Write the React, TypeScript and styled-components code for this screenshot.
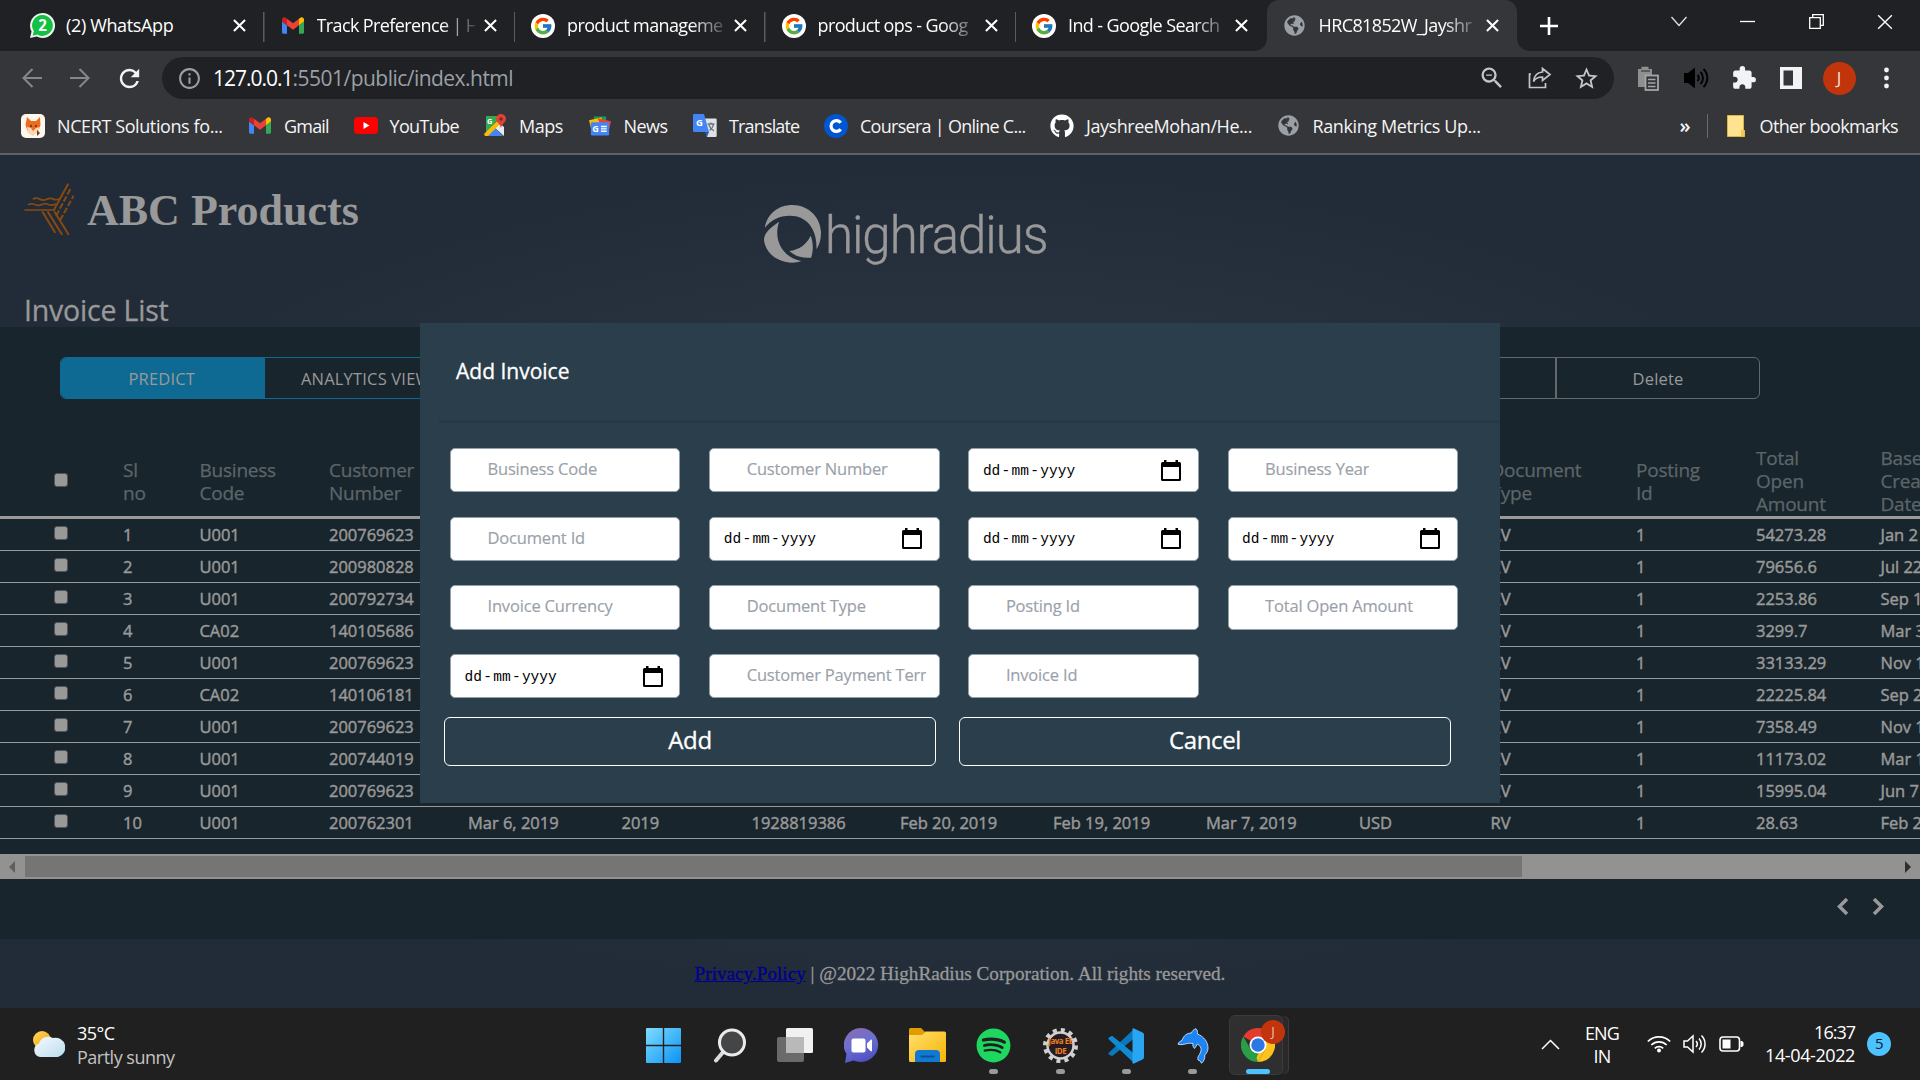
import React from 'react';
import styled, { createGlobalStyle, css } from 'styled-components';
import { FcGoogle } from 'react-icons/fc';
import { FaGithub, FaGlobeAmericas, FaSpotify } from 'react-icons/fa';
import { MdExtension, MdRefresh, MdStarBorder, MdZoomOut, MdInfoOutline } from 'react-icons/md';

const chromeFont = `"Open Sans", "Noto Sans", sans-serif`;
const pageFont = `"Open Sans", "Noto Sans", sans-serif`;

const GlobalStyle = createGlobalStyle`
  * { box-sizing: border-box; }
  body { margin: 0; background: #202124; overflow: hidden; font-family: ${pageFont}; }
  svg { display: block; flex: none; }
`;

const Screen = styled.div`
  width: 1920px;
  height: 1080px;
  display: flex;
  flex-direction: column;
  overflow: hidden;
`;

/* ---------- browser chrome ---------- */

const TabBar = styled.div`
  flex: none;
  height: 51px;
  display: flex;
  padding-left: 14px;
  background: #202124;
  font: 400 18px/24px ${chromeFont};
  color: #fff;
`;

const TabItem = styled.div<{ $active?: boolean; $divider?: boolean }>`
  position: relative;
  flex: none;
  width: 250.5px;
  height: 51px;
  display: flex;
  align-items: center;
  padding: 0 18px 0 16px;
  ${p => p.$divider && css`
    background: linear-gradient(#5a5b5e, #5a5b5e) right 12px / 1.5px 30px no-repeat;
    background-position: right 12px;
  `}
  ${p => p.$active && css`
    background: #35363a;
    border-radius: 12px 12px 0 0;
    &::before, &::after {
      content: '';
      position: absolute;
      bottom: 0;
      width: 12px;
      height: 12px;
    }
    &::before { left: -12px; background: radial-gradient(circle at 0 0, transparent 11.5px, #35363a 12px); }
    &::after { right: -12px; background: radial-gradient(circle at 100% 0, transparent 11.5px, #35363a 12px); }
  `}
`;

const TabIcon = styled.span<{ $disc?: boolean }>`
  flex: none;
  width: 24px;
  height: 24px;
  display: flex;
  align-items: center;
  justify-content: center;
  border-radius: 50%;
  background: ${p => (p.$disc ? '#fff' : 'transparent')};
`;

const TabTitle = styled.span<{ $fade?: boolean }>`
  flex: none;
  width: 158px;
  margin: -1px 9px 0 12px;
  overflow: hidden;
  white-space: nowrap;
  letter-spacing: ${p => (p.$fade ? -0.61 : -0.36)}px;
  ${p => p.$fade && css`mask-image: linear-gradient(90deg, #000 124px, rgba(0, 0, 0, 0.15) 158px);`}
`;

const NewTab = styled.div`
  width: 60px;
  display: flex;
  align-items: center;
  justify-content: center;
  margin-left: 2px;
`;

const WindowControls = styled.div`
  margin-left: auto;
  display: flex;
  width: 276px;
  padding: 14px 27px 0 27px;
  justify-content: space-between;
`;

const Toolbar = styled.div`
  flex: none;
  height: 54px;
  display: flex;
  align-items: center;
  background: #35363a;
  padding: 0 20px 0 22px;
`;

const NavButtons = styled.div`
  width: 140px;
  display: flex;
  align-items: center;
  gap: 25.5px;
`;

const AddressBar = styled.div`
  width: 1452px;
  height: 42px;
  display: flex;
  align-items: center;
  border-radius: 21px;
  background: #202124;
  padding: 0 14px 0 15px;
  color: #9aa0a6;
  font: 400 21px/30px ${chromeFont};
`;

const Url = styled.span`
  flex: 1;
  margin-left: 11px;
  white-space: nowrap;
  letter-spacing: -0.53px;
`;

const Host = styled.span`
  color: #fff;
  letter-spacing: -1px;
`;

const AddressActions = styled.div`
  display: flex;
  align-items: center;
  gap: 21.5px;
  color: #c4c7ca;
`;

const Extensions = styled.div`
  display: grid;
  grid-template-columns: 47px 47px 49px 43px 50px 26px;
  align-items: center;
  margin-left: 22.5px;
`;

const Avatar = styled.span`
  width: 33px;
  height: 33px;
  border-radius: 50%;
  background: #c2340b;
  color: #f5e3dc;
  font: 400 17px/32px ${chromeFont};
  text-align: center;
`;

const Bookmarks = styled.div`
  flex: none;
  height: 50px;
  display: flex;
  align-items: center;
  background: #35363a;
  border-bottom: 2px solid #5f6164;
  padding: 0 22px 7px 20.5px;
  color: #f4f4f4;
  font: 400 18px/24px ${chromeFont};
  white-space: nowrap;
`;

const Bookmark = styled.div<{ $w: number }>`
  flex: none;
  width: ${p => p.$w}px;
  display: flex;
  align-items: center;
  gap: 11.5px;
`;

const BookmarkLabel = styled.span<{ $ls?: number }>`
  letter-spacing: ${p => p.$ls ?? 0}px;
`;

const BookmarkIcon = styled.span`
  flex: none;
  width: 25px;
  height: 25px;
  display: flex;
  align-items: center;
  justify-content: center;
`;

const MoreMark = styled.span`
  margin-left: auto;
  width: 27px;
  font-size: 20px;
  font-weight: 600;
`;

const OtherBookmarks = styled.div`
  display: flex;
  align-items: center;
  height: 24px;
  gap: 15px;
  padding-left: 19px;
  border-left: 1.5px solid #6a6b6e;
`;

/* ---------- page ---------- */

const Page = styled.main`
  position: relative;
  flex: none;
  height: 853px;
  display: flex;
  flex-direction: column;
  background: radial-gradient(ellipse at 50% 50%, #323a48 0%, #222c38 70%);
`;

const PageHeader = styled.header`
  height: 172px;
  display: grid;
  grid-template-columns: 740px 1fr;
  grid-template-rows: 137px 35px;
  padding-left: 24px;
  color: #999;
`;

const Brand = styled.div`
  display: flex;
  align-items: center;
  height: 54px;
  margin-top: 27px;
  gap: 13px;
`;

const BrandName = styled.span`
  padding-top: 3px;
  font: 700 44px/52px "Liberation Serif", "Times New Roman", serif;
`;

const Partner = styled.div`
  display: flex;
  align-items: center;
  gap: 4px;
  height: 58px;
  margin-top: 50px;
`;

const PartnerName = styled.span`
  margin-top: 3px;
  font: 300 51px/58px Roboto, sans-serif;
  letter-spacing: -1.05px;
  -webkit-text-stroke: 0.4px #999;
`;

const ListTitle = styled.h1`
  margin: 0;
  font: 400 28.5px/36px ${pageFont};
  letter-spacing: -0.2px;
  -webkit-text-stroke: 0.3px #999;
`;

const Panel = styled.section`
  height: 612px;
  display: flex;
  flex-direction: column;
  background: #18252c;
`;

const Actions = styled.div`
  display: flex;
  justify-content: space-between;
  padding: 30px 160px 0 60px;
  height: 119px;
`;

const ButtonGroup = styled.div<{ $accent?: boolean }>`
  display: flex;
  height: 42px;
  border: 1px solid ${p => (p.$accent ? '#0e6a93' : '#63686c')};
  border-radius: 6px;
  overflow: hidden;
`;

const GroupButton = styled.div<{ $filled?: boolean; $start?: boolean; $divider?: boolean }>`
  width: 204px;
  line-height: 41px;
  font-size: 16.5px;
  text-align: ${p => (p.$start ? 'left' : 'center')};
  padding-left: ${p => (p.$start ? 36 : 0)}px;
  padding-right: ${p => (p.$filled ? 2.5 : 0)}px;
  color: #999;
  letter-spacing: 0.18px;
  background: ${p => (p.$filled ? '#0e6a93' : 'transparent')};
  border-left: ${p => (p.$divider ? '2px solid #63686c' : '0')};
  white-space: nowrap;
`;

const columns = '123px 76.5px 129.5px 139px 153.5px 130px 148.5px 153px 153px 153px 131.5px 145.500px 120px 124.500px 1fr';

const TableHead = styled.div`
  display: grid;
  grid-template-columns: ${columns};
  align-items: center;
  height: 73px;
  padding-top: 1px;
  border-bottom: 3px solid #999;
  font-size: 19px;
  line-height: 23px;
  letter-spacing: -0.22px;
  -webkit-text-stroke: 0.25px #5d656a;
  color: #5d656a;
  overflow: hidden;
`;

const HeadCell = styled.div`
  white-space: pre;
`;

const TableRow = styled.div`
  display: grid;
  grid-template-columns: ${columns};
  align-items: center;
  height: 32px;
  border-bottom: 1px solid #999;
  font-size: 16.5px;
  line-height: 30px;
  letter-spacing: -0.02px;
  -webkit-text-stroke: 0.45px #999;
  color: #999;
  white-space: nowrap;
  overflow: hidden;
`;

const CheckCell = styled.div<{ $head?: boolean }>`
  display: flex;
  padding-left: 54px;
  padding-bottom: ${p => (p.$head ? 0 : 3)}px;
  margin-top: ${p => (p.$head ? -3 : 0)}px;
`;

const Checkbox = styled.span`
  width: 14px;
  height: 14px;
  border: 1px solid #555;
  border-radius: 3px;
  background: #999;
`;

const ScrollBar = styled.div`
  display: flex;
  align-items: center;
  height: 25px;
  margin-top: 15px;
  padding: 0 9px;
  background: #929292;
`;

const Thumb = styled.div`
  width: 1497px;
  height: 21px;
  margin: 0 auto 0 10px;
  background: #757575;
`;

const Pager = styled.div`
  flex: 1;
  display: flex;
  justify-content: flex-end;
  align-items: center;
  gap: 23px;
  padding: 0 35.5px 5px 0;
`;

const Footer = styled.footer`
  height: 69px;
  display: flex;
  justify-content: center;
  font: 400 19.2px/70px "Liberation Serif", "Times New Roman", serif;
  -webkit-text-stroke: 0.3px;
  color: #999;
  white-space: pre;
`;

const PolicyLink = styled.span`
  color: #00008f;
  text-decoration: underline;
`;

/* ---------- modal ---------- */

const Modal = styled.div`
  position: absolute;
  left: 420px;
  top: 168px;
  width: 1080px;
  height: 480px;
  background: #2b3e4b;
`;

const ModalTitle = styled.h2`
  margin: 0 0 0 18px;
  height: 100px;
  padding: 28px 0 0 18px;
  border-bottom: 3px solid #283a47;
  font: 400 21px/40px ${pageFont};
  -webkit-text-stroke: 0.3px #fff;
  color: #fff;
`;

const FieldGrid = styled.div`
  display: grid;
  grid-template-columns: repeat(4, 230.4px);
  grid-auto-rows: 44.4px;
  column-gap: 28.8px;
  row-gap: 24.3px;
  padding: 25px 0 0 30px;
`;

const Field = styled.div<{ $date?: boolean }>`
  display: flex;
  align-items: center;
  justify-content: space-between;
  border: 1px solid #93a0a9;
  border-radius: 5px;
  background: #fff;
  padding: 0 ${p => (p.$date ? 16.5 : 13)}px 0 ${p => (p.$date ? 13.5 : 36.5)}px;
`;

const Placeholder = styled.span`
  margin-top: -2.5px;
  overflow: hidden;
  white-space: nowrap;
  font-size: 16.5px;
  line-height: 26px;
  letter-spacing: -0.18px;
  -webkit-text-stroke: 0.15px #9aa1a9;
  color: #9aa1a9;
`;

const DateText = styled.span`
  display: flex;
  gap: 1.3px;
  padding-top: 1px;
  font: 400 14.5px/20px "Liberation Mono", monospace;
  color: #000;
`;

const ModalActions = styled.div`
  display: grid;
  grid-template-columns: 492px 492px;
  gap: 23px;
  padding: 18.6px 0 0 24px;
`;

const ModalButton = styled.div`
  height: 49px;
  border: 1.2px solid #fff;
  border-radius: 6px;
  color: #fff;
  font: 400 24px/43px ${pageFont};
  letter-spacing: -0.4px;
  -webkit-text-stroke: 0.3px #fff;
  text-align: center;
`;

/* ---------- taskbar ---------- */

const Taskbar = styled.div`
  flex: none;
  height: 72px;
  display: grid;
  grid-template-columns: 645px 661px 1fr;
  background: #202020;
  color: #fff;
  font: 400 18px/24px ${chromeFont};
  letter-spacing: -0.5px;
`;

const Weather = styled.div`
  display: flex;
  align-items: center;
  gap: 12px;
  padding-left: 32px;
`;

const WeatherText = styled.div`
  margin-top: 1px;
`;

const Muted = styled.div`
  color: #c3c3c3;
`;

const Apps = styled.div`
  display: grid;
  grid-template-columns: repeat(10, 66.2px);
`;

const AppSlot = styled.div<{ $active?: boolean }>`
  display: flex;
  flex-direction: column;
  align-items: center;
  width: ${p => (p.$active ? 54 : 36)}px;
  height: ${p => (p.$active ? 60 : 72)}px;
  margin: ${p => (p.$active ? '7px 0 0 -12px' : '0')};
  padding-top: ${p => (p.$active ? 12 : 20)}px;
  ${p => p.$active && css`
    position: relative;
    padding-left: 5px;
    background: #2f2f2f;
    border: 1px solid #3b3b3b;
    border-radius: 6px;
    box-shadow: 6px 0 0 -1px #292929, 7px 0 0 -1px #3b3b3b;
  `}
`;

const Running = styled.span<{ $active?: boolean }>`
  flex: none;
  width: ${p => (p.$active ? 24 : 9)}px;
  height: 5px;
  margin-top: auto;
  margin-bottom: ${p => (p.$active ? 0 : 6)}px;
  border-radius: 3px;
  background: ${p => (p.$active ? '#4cc2ff' : '#9a9a9a')};
`;

const ProfileBadge = styled.span`
  position: absolute;
  left: 31px;
  top: 4px;
  width: 24px;
  height: 24px;
  border-radius: 50%;
  background: #c2340b;
  font: 400 13px/23px ${chromeFont};
  color: #e9c4b8;
  text-align: center;
`;

const Tray = styled.div`
  display: flex;
  align-items: center;
  justify-content: flex-end;
  padding-right: 29px;
`;

const Language = styled.div`
  width: 40px;
  margin: 0 25px 0 22px;
  text-align: center;
  line-height: 23px;
  letter-spacing: -0.8px;
  padding-top: 1px;
`;

const TrayIcons = styled.div`
  display: flex;
  align-items: center;
  gap: 12px;
`;

const Clock = styled.div`
  width: 100px;
  margin: 0 12px 0 11px;
  text-align: right;
  line-height: 23px;
  letter-spacing: -0.4px;
  padding-bottom: 1px;
`;

const Time = styled.div`
  letter-spacing: -1px;
`;

const Notifications = styled.span`
  width: 24px;
  height: 24px;
  border-radius: 50%;
  background: #4cc2ff;
  color: #10202b;
  font: 400 15px/23px ${chromeFont};
  text-align: center;
`;

/* ---------- drawings ---------- */

const CloseIcon = ({ size = 13, width = 2.2 }: { size?: number; width?: number }) => (
  <svg width={size} height={size} viewBox="0 0 14 14" stroke="#fff" strokeWidth={width}>
    <path d="M1 1l12 12M13 1L1 13" />
  </svg>
);

const GmailIcon = () => (
  <svg width="22" height="17" viewBox="52 42 88 66">
    <path fill="#4285f4" d="M58 108h14V74L52 59v43c0 3.32 2.69 6 6 6" />
    <path fill="#34a853" d="M120 108h14c3.32 0 6-2.69 6-6V59l-20 15" />
    <path fill="#fbbc04" d="M120 48v26l20-15v-8c0-7.42-8.47-11.65-14.4-7.2" />
    <path fill="#ea4335" d="M72 74V48l24 18 24-18v26L96 92" />
    <path fill="#c5221f" d="M52 51v8l20 15V48l-5.6-4.2c-5.94-4.45-14.4-.22-14.4 7.2" />
  </svg>
);

const WhatsAppIcon = () => (
  <svg width="25" height="25" viewBox="0 0 24 24">
    <path fill="#e9f7ec" d="M12 0a12 12 0 1 1-5.6 22.6L0 24l1.5-6.2A12 12 0 0 1 12 0z" />
    <path fill="#12c143" d="M12 2a10 10 0 1 1-5 18.7L2.6 21.8l1.1-4.3A10 10 0 0 1 12 2z" />
    <text x="12" y="17.4" textAnchor="middle" fill="#fff" fontSize="14.5" fontWeight="700" fontFamily="Open Sans, sans-serif">2</text>
  </svg>
);

const FoxIcon = () => (
  <svg width="24" height="24" viewBox="0 0 24 24">
    <rect width="24" height="24" rx="5" fill="#fdf7ee" />
    <path fill="#ec6b1e" d="M6 3l4 4h5l4-4 .5 8-2 6-5 3-6-3L4.500 11z" />
    <path fill="#f7d9b5" d="M6 13l4 1 2 3 3-3 4-1-2 5-5 4-5-3z" />
    <path fill="#7c3a16" d="M9 11h2v2H9zM14 11h2v2h-2zM16 16l3 3-3 3z" />
  </svg>
);

const YouTubeIcon = () => (
  <svg width="24" height="17" viewBox="0 0 24 17">
    <rect width="24" height="17" rx="4" fill="#f00" />
    <path fill="#fff" d="M9.500 5v7l6-3.500z" />
  </svg>
);

const MapsIcon = () => (
  <svg width="22" height="23" viewBox="0 0 22 23">
    <path fill="#34a853" d="M2 2h15L2 19z" />
    <path fill="#4285f4" d="M10 13l9 9H2z" />
    <path fill="#e8eaed" d="M14 8l6 5v9L10 13z" />
    <path fill="#fbbc04" d="M0 20L13 7l3 3L4 22H1z" />
    <text x="3" y="9.500" fill="#fff" fontSize="7.500" fontWeight="700" fontFamily="Open Sans, sans-serif">G</text>
    <path fill="#db4437" d="M17 0a5 5 0 0 1 5 5c0 3-4 4.500-5 9-1-4.500-5-6-5-9a5 5 0 0 1 5-5z" />
    <circle cx="17" cy="5" r="1.700" fill="#8c1d12" />
  </svg>
);

const NewsIcon = () => (
  <svg width="22" height="20" viewBox="0 0 23 20">
    <path fill="#0f9d58" d="M5 0h13v8H5z" />
    <path fill="#fbbc04" d="M0 4l13-3 2 6-13 5z" />
    <path fill="#ea4335" d="M9 2l14 3-2 9-8-3z" />
    <rect x="2" y="6" width="19" height="14" rx="1.500" fill="#4285f4" />
    <text x="3.500" y="16.500" fill="#fff" fontSize="9.500" fontWeight="700" fontFamily="Open Sans, sans-serif">G</text>
    <path stroke="#fff" strokeWidth="1.500" d="M12.500 10.500h6M12.500 13h6M12.500 15.500h6" />
  </svg>
);

const TranslateIcon = () => (
  <svg width="24" height="23" viewBox="0 0 24 23">
    <path fill="#dfe1e5" d="M10 4.500h12.500a1.200 1.200 0 0 1 1.200 1.200v16a1.200 1.200 0 0 1-1.200 1.200H14z" />
    <path fill="#4285f4" d="M1 0h10l5 18H1.200A1.200 1.200 0 0 1 0 16.800V1a1 1 0 0 1 1-1z" />
    <path fill="#2a56c6" d="M12 18h4l-2 5z" />
    <path stroke="#6b7683" strokeWidth="1.300" fill="none" d="M14.500 10h7M18 8.500V10M20.500 10c-.5 3-2.500 5.500-4 6.500M16 11c.8 2.500 3 5 5 6" />
    <text x="3" y="12" fill="#fff" fontSize="9.500" fontWeight="700" fontFamily="Open Sans, sans-serif">G</text>
  </svg>
);

const CourseraIcon = () => (
  <svg width="24" height="24" viewBox="0 0 24 24">
    <circle cx="12" cy="12" r="12" fill="#0056d2" />
    <path d="M16.700 8.700a5.400 5.400 0 1 0 0 6.600" fill="none" stroke="#fff" strokeWidth="3.200" />
  </svg>
);

const ReloadIcon = () => <MdRefresh size={29} color="#f1f3f4" />;

const ShareIcon = () => (
  <svg width="24" height="22" viewBox="0 0 24 22" fill="none" stroke="#c4c7ca" strokeWidth="1.700">
    <path d="M3 7H1.500v13.500h16V16" />
    <path d="M14.500 1.500l7.500 6-7.500 6V10c-4 0-7 1-9 4.500C6 9.500 9 5.500 14.500 5z" />
  </svg>
);

const ClipboardIcon = () => (
  <svg width="22" height="25" viewBox="0 0 22 25">
    <path fill="#8f8f8f" d="M1 3h3.500V.8h7V3H15v6H8v12H1z" />
    <path stroke="#35363a" strokeWidth="1.200" d="M4 5h9" />
    <rect x="8.500" y="9.500" width="12.500" height="14.500" fill="#35363a" stroke="#a5a5a5" strokeWidth="1.800" />
    <path stroke="#a5a5a5" strokeWidth="1.600" d="M11 13.500h7.500M11 17h7.500M11 20.500h7.500" />
  </svg>
);

const SpeakerIcon = () => (
  <svg width="25" height="22" viewBox="0 0 25 22" fill="none" stroke="#000" strokeWidth="1.900">
    <path fill="#000" stroke="none" d="M0 6h4l7-5.500v21L4 16H0z" />
    <path d="M13.500 8a4.500 4.500 0 0 1 0 6M16.500 5a8.500 8.500 0 0 1 0 12M19.500 2a12.500 12.500 0 0 1 0 18" />
  </svg>
);

const FolderNote = () => (
  <svg width="18" height="22" viewBox="0 0 18 22">
    <path fill="#ffe390" stroke="#dcb73f" d="M.5.5h16v14l1 1v6H.5z" />
    <path fill="#f1c94c" d="M14 15h3.500v6.500H14z" />
  </svg>
);

const BrandMark = () => (
  <svg width="50" height="53" viewBox="58 95 123 157" preserveAspectRatio="none" fill="none" stroke="#89490f" strokeWidth="5">
    <path d="M59 175h76M130 178L167 97M103 179l32 64M116 179l36 70M133 180l35 69" />
    <path strokeDasharray="17 6" d="M137 192l35-79M147 205l33-72" />
    <path d="M80 143c8-6 12-3 17 0s10 4 17 0 12-3 17 0 10 2 16-1M68 160c8-6 12-4 17-1s10 4 17 0 12-3 17 0 10 2 18-2" />
  </svg>
);

const RingMark = () => (
  <svg width="57" height="58" viewBox="304 75 139 174" preserveAspectRatio="none" fill="#999">
    <path d="M306 143C312 100 340 75 373 75c40 0 70 38 70 84 0 20-4 35-11 49 2-62-24-101-65-101-26 0-47 14-61 36z" />
    <path d="M341 125c-22 18-37 34-37 55 4 40 34 68 69 68 8 0 15-2 22-5-44-10-70-62-54-118z" />
    <path d="M418 167c6 20 7 45 1 66-22 3-40-5-53-20 24-4 42-20 52-46z" />
  </svg>
);

const CalendarIcon = () => (
  <svg width="20" height="21" viewBox="0 0 20 21">
    <path fill="#000" d="M3 0h2.500v2h9V0H17v2h1.500A1.500 1.500 0 0 1 20 3.500v16a1.500 1.500 0 0 1-1.500 1.500h-17A1.500 1.500 0 0 1 0 19.500v-16A1.500 1.500 0 0 1 1.500 2H3z" />
    <path fill="#fff" d="M2 7h16v12H2z" />
  </svg>
);

const WeatherIcon = () => (
  <svg width="33" height="28" viewBox="0 0 33 28">
    <defs>
      <linearGradient id="cloud" x1="0" y1="0" x2="1" y2="1"><stop offset="0" stopColor="#f6fafc" /><stop offset="1" stopColor="#b9ddf0" /></linearGradient>
      <linearGradient id="sun" x1="0" y1="0" x2="1" y2="1"><stop offset="0" stopColor="#ffd75e" /><stop offset="1" stopColor="#f59f0a" /></linearGradient>
    </defs>
    <circle cx="10" cy="10" r="9" fill="url(#sun)" />
    <path fill="url(#cloud)" d="M8 27a7 7 0 0 1-1-13.500A9.500 9.500 0 0 1 21 8a9 9 0 0 1 5 19z" />
  </svg>
);

const WindowsIcon = () => (
  <svg width="35" height="35" viewBox="0 0 35 35">
    <defs><linearGradient id="win" x1="0" y1="0" x2="1" y2="1"><stop offset="0" stopColor="#7fdcff" /><stop offset="1" stopColor="#0a93f5" /></linearGradient></defs>
    <path fill="url(#win)" d="M1 0h15.800v16.800H0V1a1 1 0 0 1 1-1zM18.200 0H34a1 1 0 0 1 1 1v15.800H18.200zM0 18.200h16.800V35H1a1 1 0 0 1-1-1zM18.200 18.200H35V34a1 1 0 0 1-1 1H18.200z" />
  </svg>
);

const SearchIcon = () => (
  <svg width="35" height="35" viewBox="0 0 35 35">
    <path d="M12 23L4 32.500" stroke="#d9dcde" strokeWidth="4" strokeLinecap="round" />
    <circle cx="20" cy="14.500" r="12.500" fill="#454545" stroke="#e9ecee" strokeWidth="3" />
  </svg>
);

const TaskViewIcon = () => (
  <svg width="36" height="35" viewBox="0 0 36 35">
    <rect x="0" y="9" width="27" height="25" rx="2" fill="#6a6a6a" />
    <rect x="9" y="0" width="27" height="25" rx="1.500" fill="#f1f1f1" />
    <path fill="#b9b9b9" d="M9 9h18v16H10.500A1.500 1.500 0 0 1 9 23.500z" />
  </svg>
);

const ChatIcon = () => (
  <svg width="35" height="35" viewBox="0 0 35 35">
    <defs><linearGradient id="chat" x1="0.100" y1="0" x2="0.500" y2="1"><stop offset="0" stopColor="#8c6bb5" /><stop offset="0.500" stopColor="#6b6fd0" /><stop offset="1" stopColor="#4f51c4" /></linearGradient></defs>
    <path fill="url(#chat)" d="M17.500 0a17.500 17 0 1 1-8 32.500L1 35l1.500-9A17.500 17 0 0 1 17.500 0z" />
    <rect x="7.500" y="10.500" width="14" height="14" rx="2" fill="#fff" />
    <path fill="#fff" d="M23 15.500l3.500-3.500c.8-.8 1.500-.3 1.500.6v9.800c0 .9-.7 1.400-1.500.6L23 19.500z" />
  </svg>
);

const ExplorerIcon = () => (
  <svg width="37" height="34" viewBox="0 0 37 34">
    <defs><linearGradient id="fold" x1="0" y1="0" x2="1" y2="1"><stop offset="0" stopColor="#ffdf70" /><stop offset="1" stopColor="#f7b500" /></linearGradient></defs>
    <path fill="#e29c00" d="M1.500 0H12l4 4-2 4H0V1.500A1.500 1.500 0 0 1 1.500 0z" />
    <path fill="url(#fold)" d="M0 7h13l3.500-3.500h19A1.500 1.500 0 0 1 37 5v27.500a1.500 1.500 0 0 1-1.500 1.500h-34A1.500 1.500 0 0 1 0 32.500z" />
    <path fill="#1279d3" d="M10 22h17c2.500 0 4 1.500 4 4v8H6v-8c0-2.500 1.500-4 4-4z" />
    <path stroke="#0a4f92" strokeWidth="1.800" d="M11.500 28.500h14" />
  </svg>
);

const JavaIdeIcon = () => (
  <svg width="35" height="35" viewBox="0 0 35 35">
    <circle cx="17.500" cy="17.500" r="15.500" fill="none" stroke="#d0d0d0" strokeWidth="4" strokeDasharray="4 4.100" />
    <circle cx="17.500" cy="17.500" r="13" fill="#241c22" stroke="#d0d0d0" strokeWidth="2.500" />
    <text x="17.500" y="15.500" textAnchor="middle" fill="#ef7f1f" fontSize="8" fontWeight="700" fontFamily="Open Sans, sans-serif">Java EE</text>
    <text x="17.500" y="25.500" textAnchor="middle" fill="#ef7f1f" fontSize="8" fontWeight="700" fontFamily="Open Sans, sans-serif">IDE</text>
  </svg>
);

const VsCodeIcon = () => (
  <svg width="36" height="36" viewBox="0 0 36 36">
    <path fill="#0a78bd" d="M1 24.500L26 1v9.500L5 27.500c-.8.600-1.500.5-2.200 0L1 26.500c-.8-.6-.8-1.400 0-2z" />
    <path fill="#0f8bd6" d="M1 11.500L26 35v-9.500L5 8.500c-.8-.6-1.500-.5-2.200 0L1 9.500c-.8.6-.8 1.400 0 2z" />
    <path fill="#2aa5f2" d="M26 .5l8.500 4A2.500 2.500 0 0 1 36 7v22a2.500 2.500 0 0 1-1.500 2.500l-8.500 4c-1 .5-1.500 0-1.500-1V1.500c0-1 .5-1.500 1.500-1z" />
  </svg>
);

const DolphinIcon = () => (
  <svg width="34" height="36" viewBox="0 0 34 36">
    <path
      fill="#1d84f5"
      stroke="#e6f1ff"
      strokeWidth="0.800"
      d="M20 .7c1.500 1.500 1.800 3.500 1.400 5.300C28 8.500 32 14 32 20c0 3-1.200 5-3.200 7 .2 3-.5 6-3.300 8.300-.8-2-2-3-3.500-3.300-.5-2 0-4 1.500-5.500l1.500-3.500c.8-3-1-5.500-3.500-7l-3 4.500c-1.500-1.500-2-3-1.500-5-2.500-.4-5-.3-7 .3-3 .8-5 1.200-8 .4.5-2 2-3 4-3.700C7.500 7.500 11 5 15.500 5 16 3 17.500 1.500 20 .7z"
    />
  </svg>
);

const ChromeIcon = () => (
  <svg width="34" height="34" viewBox="0 0 48 48">
    <path fill="#e33b2e" d="M24 24L3.200 12A24 24 0 0 1 44.800 12z" />
    <path fill="#2a9d48" d="M24 24v0L24 48A24 24 0 0 1 3.200 12l10.400 18z" />
    <path fill="#fcc31e" d="M24 24L44.800 12A24 24 0 0 1 24 48l10.400-18z" />
    <path fill="#fcc31e" d="M34.400 30L24 48l-2-6 6-14z" />
    <circle cx="24" cy="24" r="12" fill="#fff" />
    <circle cx="24" cy="24" r="9.500" fill="#2b78e4" />
  </svg>
);

/* ---------- data ---------- */

const google = <FcGoogle size={20} />;
const globe = <FaGlobeAmericas size={21} color="#9aa0a6" />;

const tabs = [
  { title: '(2) WhatsApp', icon: <WhatsAppIcon />, divider: true },
  { title: 'Track Preference | H', icon: <GmailIcon />, divider: true, fade: true },
  { title: 'product manageme', icon: google, disc: true, divider: true, fade: true },
  { title: 'product ops - Goog', icon: google, disc: true, divider: true, fade: true },
  { title: 'Ind - Google Search', icon: google, disc: true, fade: true },
  { title: 'HRC81852W_Jayshr', icon: globe, active: true, fade: true },
];

const bookmarks = [
  { label: 'NCERT Solutions fo...', icon: <FoxIcon />, w: 227, ls: -0.4 },
  { label: 'Gmail', icon: <GmailIcon />, w: 105.5, ls: -0.8 },
  { label: 'YouTube', icon: <YouTubeIcon />, w: 129.5, ls: -0.65 },
  { label: 'Maps', icon: <MapsIcon />, w: 104.5, ls: -0.45 },
  { label: 'News', icon: <NewsIcon />, w: 105.5, ls: -0.55 },
  { label: 'Translate', icon: <TranslateIcon />, w: 131, ls: -0.85 },
  { label: 'Coursera | Online C...', icon: <CourseraIcon />, w: 226, ls: -0.72 },
  { label: 'JayshreeMohan/He...', icon: <FaGithub size={24} color="#fff" />, w: 226.500, ls: -0.44 },
  { label: 'Ranking Metrics Up...', icon: globe, w: 220, ls: -0.4 },
];

const headings = ['Sl\nno', 'Business\nCode', 'Customer\nNumber', '', '', '', '', '', '', '', 'Document\nType', 'Posting\nId', 'Total\nOpen\nAmount', 'Base\nCrea\nDate'];

const blank = ['', '', '', '', '', '', ''];
const rows = [
  ['1', 'U001', '200769623', ...blank, 'RV', '1', '54273.28', 'Jan 2'],
  ['2', 'U001', '200980828', ...blank, 'RV', '1', '79656.6', 'Jul 22'],
  ['3', 'U001', '200792734', ...blank, 'RV', '1', '2253.86', 'Sep 1'],
  ['4', 'CA02', '140105686', ...blank, 'RV', '1', '3299.7', 'Mar 3'],
  ['5', 'U001', '200769623', ...blank, 'RV', '1', '33133.29', 'Nov 1'],
  ['6', 'CA02', '140106181', ...blank, 'RV', '1', '22225.84', 'Sep 2'],
  ['7', 'U001', '200769623', ...blank, 'RV', '1', '7358.49', 'Nov 1'],
  ['8', 'U001', '200744019', ...blank, 'RV', '1', '11173.02', 'Mar 1'],
  ['9', 'U001', '200769623', ...blank, 'RV', '1', '15995.04', 'Jun 7'],
  ['10', 'U001', '200762301', 'Mar 6, 2019', '2019', '1928819386', 'Feb 20, 2019', 'Feb 19, 2019', 'Mar 7, 2019', 'USD', 'RV', '1', '28.63', 'Feb 2'],
];

const DATE = 'date';
const fields = [
  'Business Code', 'Customer Number', DATE, 'Business Year',
  'Document Id', DATE, DATE, DATE,
  'Invoice Currency', 'Document Type', 'Posting Id', 'Total Open Amount',
  DATE, 'Customer Payment Terms', 'Invoice Id',
];

const DateField = () => (
  <Field $date>
    <DateText><span>dd</span><span>-</span><span>mm</span><span>-</span><span>yyyy</span></DateText>
    <CalendarIcon />
  </Field>
);

export default function App() {
  return (
    <Screen>
      <GlobalStyle />
      <TabBar>
        {tabs.map(t => (
          <TabItem key={t.title} $active={t.active} $divider={t.divider}>
            <TabIcon $disc={t.disc}>{t.icon}</TabIcon>
            <TabTitle $fade={t.fade}>{t.title}</TabTitle>
            <CloseIcon />
          </TabItem>
        ))}
        <NewTab>
          <svg width="18" height="18" viewBox="0 0 18 18" stroke="#fff" strokeWidth="2.600"><path d="M9 0v18M0 9h18" /></svg>
        </NewTab>
        <WindowControls>
          <svg width="16" height="15" viewBox="0 0 16 15" fill="none" stroke="#e8e8e8" strokeWidth="1.200"><path d="M.5 3l7.500 8.500L15.500 3" /></svg>
          <svg width="15" height="15" viewBox="0 0 15 15" stroke="#fff" strokeWidth="1.300"><path d="M0 7.500h15" /></svg>
          <svg width="15" height="15" viewBox="0 0 15 15" fill="none" stroke="#fff" strokeWidth="1.300"><path d="M.7 3.700h10.600v10.600H.7zM3.700 3.500V.7h10.600v10.600h-2.800" /></svg>
          <CloseIcon size={16} width={1.2} />
        </WindowControls>
      </TabBar>

      <Toolbar>
        <NavButtons>
          <svg width="21" height="20" viewBox="0 0 21 20" fill="none" stroke="#85878a" strokeWidth="2"><path d="M20 10H2M10.500 1L1.500 10l9 9" /></svg>
          <svg width="21" height="20" viewBox="0 0 21 20" fill="none" stroke="#85878a" strokeWidth="2"><path d="M1 10h18M10.500 1l9 9-9 9" /></svg>
          <ReloadIcon />
        </NavButtons>
        <AddressBar>
          <MdInfoOutline size={25} />
          <Url><Host>127.0.0.1</Host>:5501/public/index.html</Url>
          <AddressActions>
            <MdZoomOut size={28} />
            <ShareIcon />
            <MdStarBorder size={27} />
          </AddressActions>
        </AddressBar>
        <Extensions>
          <ClipboardIcon />
          <SpeakerIcon />
          <MdExtension size={26} color="#f1f3f4" />
          <svg width="22" height="22" viewBox="0 0 22 22"><path fill="#f1f3f4" fillRule="evenodd" d="M0 0h22v22H0zM3.500 3.500v15H13v-15z" /></svg>
          <Avatar>J</Avatar>
          <svg width="26" height="22" viewBox="0 0 26 22" fill="#f1f3f4"><circle cx="13.500" cy="3" r="2.400" /><circle cx="13.500" cy="11" r="2.400" /><circle cx="13.500" cy="19" r="2.400" /></svg>
        </Extensions>
      </Toolbar>

      <Bookmarks>
        {bookmarks.map(b => (
          <Bookmark key={b.label} $w={b.w}>
            <BookmarkIcon>{b.icon}</BookmarkIcon>
            <BookmarkLabel $ls={b.ls}>{b.label}</BookmarkLabel>
          </Bookmark>
        ))}
        <MoreMark>»</MoreMark>
        <OtherBookmarks>
          <FolderNote />
          <BookmarkLabel $ls={-0.62}>Other bookmarks</BookmarkLabel>
        </OtherBookmarks>
      </Bookmarks>

      <Page>
        <PageHeader>
          <Brand><BrandMark /><BrandName>ABC Products</BrandName></Brand>
          <Partner><RingMark /><PartnerName>highradius</PartnerName></Partner>
          <ListTitle>Invoice List</ListTitle>
        </PageHeader>

        <Panel>
          <Actions>
            <ButtonGroup $accent>
              <GroupButton $filled>PREDICT</GroupButton>
              <GroupButton $start>ANALYTICS VIEW</GroupButton>
            </ButtonGroup>
            <ButtonGroup>
              <GroupButton />
              <GroupButton $divider>Delete</GroupButton>
            </ButtonGroup>
          </Actions>

          <TableHead>
            <CheckCell $head><Checkbox /></CheckCell>
            {headings.map((h, i) => <HeadCell key={i}>{h}</HeadCell>)}
          </TableHead>
          {rows.map(r => (
            <TableRow key={r[0]}>
              <CheckCell><Checkbox /></CheckCell>
              {r.map((c, i) => <span key={i}>{c}</span>)}
            </TableRow>
          ))}

          <ScrollBar>
            <svg width="6" height="12" viewBox="0 0 6 12"><path fill="#5f5f5f" d="M6 0v12L0 6z" /></svg>
            <Thumb />
            <svg width="6" height="12" viewBox="0 0 6 12"><path fill="#2e2e2e" d="M0 0v12l6-6z" /></svg>
          </ScrollBar>

          <Pager>
            <svg width="13" height="17" viewBox="0 0 13 17" fill="none" stroke="#999" strokeWidth="3.500"><path d="M11 1L3.500 8.500 11 16" /></svg>
            <svg width="13" height="17" viewBox="0 0 13 17" fill="none" stroke="#999" strokeWidth="3.500"><path d="M2 1l7.500 7.500L2 16" /></svg>
          </Pager>
        </Panel>

        <Footer>
          <PolicyLink>Privacy.Policy</PolicyLink> | @2022 HighRadius Corporation. All rights reserved.
        </Footer>

        <Modal>
          <ModalTitle>Add Invoice</ModalTitle>
          <FieldGrid>
            {fields.map((f, i) => (f === DATE
              ? <DateField key={i} />
              : <Field key={i}><Placeholder>{f}</Placeholder></Field>
            ))}
          </FieldGrid>
          <ModalActions>
            <ModalButton>Add</ModalButton>
            <ModalButton>Cancel</ModalButton>
          </ModalActions>
        </Modal>
      </Page>

      <Taskbar>
        <Weather>
          <WeatherIcon />
          <WeatherText>
            <div>35°C</div>
            <Muted>Partly sunny</Muted>
          </WeatherText>
        </Weather>
        <Apps>
          <AppSlot><WindowsIcon /></AppSlot>
          <AppSlot><SearchIcon /></AppSlot>
          <AppSlot><TaskViewIcon /></AppSlot>
          <AppSlot><ChatIcon /></AppSlot>
          <AppSlot><ExplorerIcon /></AppSlot>
          <AppSlot><FaSpotify size={35} color="#1ed760" /><Running /></AppSlot>
          <AppSlot><JavaIdeIcon /><Running /></AppSlot>
          <AppSlot><VsCodeIcon /><Running /></AppSlot>
          <AppSlot><DolphinIcon /><Running /></AppSlot>
          <AppSlot $active><ChromeIcon /><Running $active /><ProfileBadge>J</ProfileBadge></AppSlot>
        </Apps>
        <Tray>
          <svg width="19" height="11" viewBox="0 0 19 11" fill="none" stroke="#fff" strokeWidth="1.500"><path d="M1 10l8.500-8.500L18 10" /></svg>
          <Language>ENG<br />IN</Language>
          <TrayIcons>
            <svg width="24" height="18" viewBox="0 0 24 18" fill="none" stroke="#fff" strokeWidth="1.700">
              <path d="M.8 6.500a16 16 0 0 1 22.400 0M4.300 10a11 11 0 0 1 15.400 0M7.800 13.300a6 6 0 0 1 8.400 0" />
              <circle cx="12" cy="15.500" r="2" fill="#fff" stroke="none" />
            </svg>
            <svg width="24" height="20" viewBox="0 0 24 20" fill="none" stroke="#fff" strokeWidth="1.500">
              <path d="M1 7h3.500L10 2v16l-5.500-5H1zM13 7a4.500 4.500 0 0 1 0 6M16 4.500a8 8 0 0 1 0 11M18.500 1.500a12 12 0 0 1 0 17" />
            </svg>
            <svg width="25" height="16" viewBox="0 0 25 16" fill="none" stroke="#fff" strokeWidth="1.600">
              <rect x="1" y="1" width="19.500" height="14" rx="3" />
              <path fill="#fff" stroke="none" d="M3.500 3.500h8v9h-8zM21.500 5h1.500l1.500 1.500v3L23 11h-1.500z" />
            </svg>
          </TrayIcons>
          <Clock>
            <Time>16:37</Time>
            <div>14-04-2022</div>
          </Clock>
          <Notifications>5</Notifications>
        </Tray>
      </Taskbar>
    </Screen>
  );
}
